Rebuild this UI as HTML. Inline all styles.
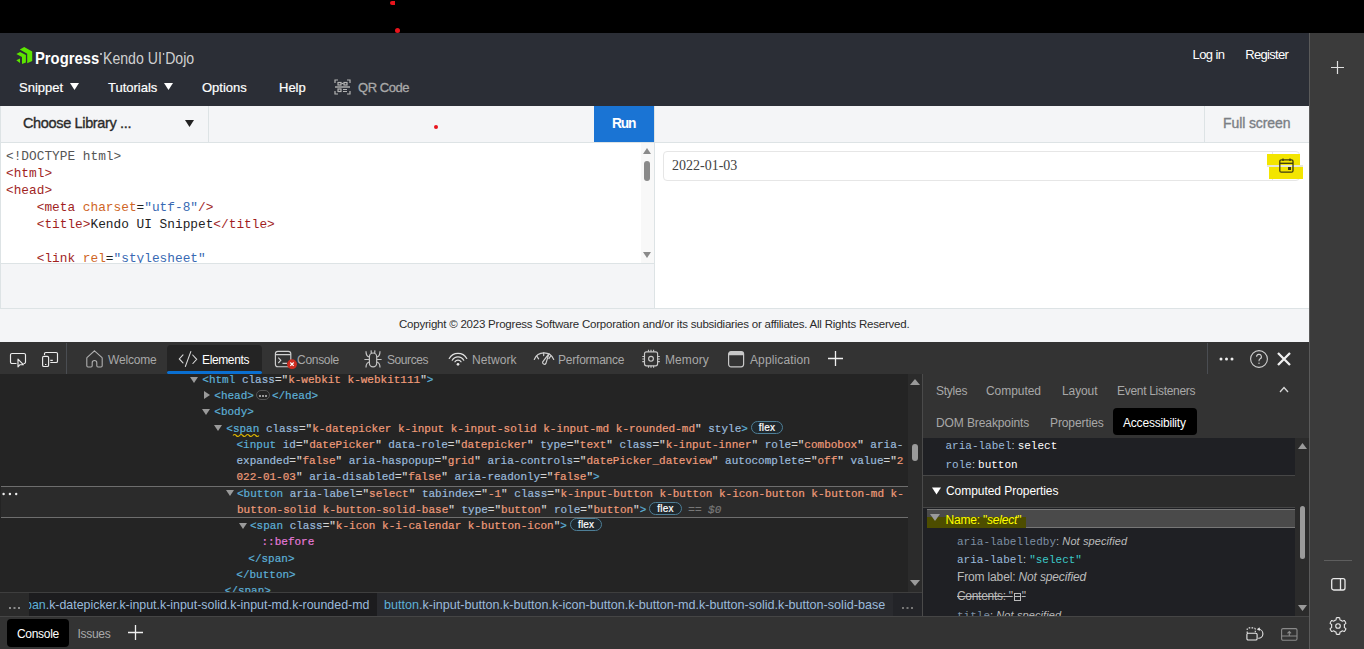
<!DOCTYPE html>
<html><head><meta charset="utf-8">
<style>
*{box-sizing:border-box;margin:0;padding:0}
html,body{width:1364px;height:649px;overflow:hidden;background:#000;font-family:"Liberation Sans",sans-serif}
.a{position:absolute}
.t{position:absolute;white-space:pre}
.mono{font-family:"Liberation Mono",monospace}
/* code editor */
.ce{font-family:"Liberation Mono",monospace;font-size:12.8px;line-height:17px;color:#222}
.tg{color:#a11f1f}.at{color:#cf6526}.vl{color:#3869b3}
/* devtools elements */
.el{font-family:"Liberation Mono",monospace;font-size:11px;line-height:16.25px;height:16.25px;white-space:pre;color:#ccc;-webkit-text-stroke:0.2px currentColor}
.b{color:#5db0d7}.n{color:#9bbbdc}.v{color:#f09c7a}.p{color:#d4d4d4}
.tri{position:absolute;width:0;height:0;border-left:4px solid transparent;border-right:4px solid transparent;border-top:6px solid #9a9a9a}
.flex{display:inline-block;font-family:"Liberation Sans",sans-serif;font-size:10px;line-height:11px;color:#fff;border:1px solid #4e7e96;border-radius:7px;padding:0 7px;margin-left:3px;vertical-align:1px;background:#1f282d;letter-spacing:0.2px}
.tab{position:absolute;top:354px;font-size:12px;line-height:12px;color:#a8a8a8;letter-spacing:-0.3px;white-space:pre}
.ic{position:absolute;overflow:visible}
</style></head>
<body>
<!-- top black bar dots -->
<div class="a" style="left:390px;top:1px;width:5px;height:4px;border-radius:2px 0 0 2px;background:#e8141c"></div>
<div class="a" style="left:395px;top:28px;width:5px;height:5px;border-radius:50%;background:#e8141c"></div>

<!-- dojo header -->
<div class="a" style="left:0;top:33px;width:1309px;height:73px;background:#2b2e36"></div>
<svg class="ic" style="left:15px;top:46px" width="19" height="19" viewBox="0 0 19 19">
  <polygon points="4.8,3.5 9.2,1 17.2,5.5 17.2,15 12.2,17.2 12.2,7.8" fill="#5ce500"/>
  <polygon points="1.3,8 5.1,6 10.9,9.1 10.9,16.5 7,18 7,11" fill="#5ce500"/>
  <polygon points="1.3,14.3 5,12.6 5,17" fill="#5ce500"/>
</svg>
<div class="t" style="left:35px;top:49.5px;color:#fff;font-size:17px;line-height:17px;font-weight:bold;transform:scaleX(0.87);transform-origin:0 0">Progress</div>
<div class="a" style="left:99.5px;top:53px;width:2px;height:2px;border-radius:1px;background:#ddd"></div>
<div class="t" style="left:103px;top:49.5px;color:#d0d0d0;font-size:17px;line-height:17px;transform:scaleX(0.83);transform-origin:0 0">Kendo UI<span style="display:inline-block;width:2px;height:2px;border-radius:1px;background:#ccc;vertical-align:9px;margin:0 1px"></span>Dojo</div>
<div class="t" style="left:1192.5px;top:48px;color:#fff;font-size:13px;line-height:13px;letter-spacing:-0.6px">Log in</div>
<div class="t" style="left:1245.3px;top:48px;color:#fff;font-size:13px;line-height:13px;letter-spacing:-0.7px">Register</div>
<div class="t" style="left:19px;top:81px;color:#fff;font-size:13px;line-height:13px;-webkit-text-stroke:0.2px #fff">Snippet</div>
<svg class="ic" style="left:70px;top:83px" width="9" height="8"><polygon points="0,0 9,0 4.5,7" fill="#fff"/></svg>
<div class="t" style="left:108px;top:81px;color:#fff;font-size:13px;line-height:13px;-webkit-text-stroke:0.2px #fff">Tutorials</div>
<svg class="ic" style="left:164px;top:83px" width="9" height="8"><polygon points="0,0 9,0 4.5,7" fill="#fff"/></svg>
<div class="t" style="left:202px;top:81px;color:#fff;font-size:13px;line-height:13px;-webkit-text-stroke:0.2px #fff">Options</div>
<div class="t" style="left:279px;top:81px;color:#fff;font-size:13px;line-height:13px;-webkit-text-stroke:0.2px #fff">Help</div>
<svg class="ic" style="left:334px;top:79px" width="17" height="16" viewBox="0 0 17 16" fill="none" stroke="#b4b4b4" stroke-width="1.2">
  <path d="M1,4 V1 H4 M13,1 H16 V4 M16,12 V15 H13 M4,15 H1 V12"/>
  <rect x="4" y="3.5" width="3" height="2.5"/><rect x="10" y="3.5" width="3" height="2.5"/>
  <path d="M7.5,4.5 H9.5"/>
  <path d="M1,8 H16" stroke-width="1.4"/>
  <rect x="4" y="10" width="3" height="2.5"/><path d="M9,10.5 H13 M9,12.5 H13"/>
</svg>
<div class="t" style="left:358px;top:81px;color:#a9a9a9;font-size:13px;line-height:13px;letter-spacing:-0.45px;-webkit-text-stroke:0.3px #a9a9a9">QR Code</div>

<!-- toolbar -->
<div class="a" style="left:0;top:106px;width:1309px;height:37px;background:#f4f5f7;border-bottom:1px solid #dde3e5;border-left:1px solid #dde3e5"></div>
<div class="t" style="left:23px;top:116px;color:#2b2b2b;font-size:14.5px;line-height:14.5px;letter-spacing:-0.35px;-webkit-text-stroke:0.35px #2b2b2b">Choose Library ...</div>
<svg class="ic" style="left:185px;top:120px" width="9" height="8"><polygon points="0,0 9,0 4.5,7" fill="#222"/></svg>
<div class="a" style="left:208px;top:106px;width:1px;height:36px;background:#dde3e5"></div>
<div class="a" style="left:594px;top:106px;width:60px;height:36px;background:#1a74d4"></div>
<div class="t" style="left:612px;top:116.5px;color:#fff;font-size:13.8px;line-height:13.8px;font-weight:bold;letter-spacing:-1.2px">Run</div>
<div class="a" style="left:654px;top:106px;width:1px;height:37px;background:#dde3e5"></div>
<div class="a" style="left:1204px;top:106px;width:1px;height:36px;background:#dde3e5"></div>
<div class="t" style="left:1223px;top:116px;color:#7b7f85;font-size:14px;line-height:14px;letter-spacing:-0.1px;-webkit-text-stroke:0.35px #7b7f85">Full screen</div>
<!-- red dot -->
<div class="a" style="left:434px;top:124.5px;width:4px;height:4px;border-radius:50%;background:#e8141c"></div>

<!-- editor -->
<div class="a" style="left:0;top:143px;width:654px;height:120px;background:#fff;border-left:1px solid #dde3e5;overflow:hidden">
<div class="t ce" style="left:5px;top:4.8px"><span style="color:#555">&lt;!DOCTYPE html&gt;</span>
<span class="tg">&lt;html&gt;</span>
<span class="tg">&lt;head&gt;</span>
    <span class="tg">&lt;meta</span> <span class="at">charset</span>=<span class="vl">"utf-8"</span><span class="tg">/&gt;</span>
    <span class="tg">&lt;title&gt;</span>Kendo UI Snippet<span class="tg">&lt;/title&gt;</span>

    <span class="tg">&lt;link</span> <span class="at">rel</span>=<span class="vl">"stylesheet"</span></div>
</div>
<!-- editor scrollbar -->
<div class="a" style="left:641px;top:143px;width:13px;height:120px;background:#f8f8f8"></div>
<svg class="ic" style="left:642px;top:147px" width="10" height="8"><polygon points="5,1 9,7 1,7" fill="#8a8a8a"/></svg>
<div class="a" style="left:644px;top:160.5px;width:6px;height:20.5px;border-radius:3px;background:#8a8a8a"></div>
<svg class="ic" style="left:642px;top:251px" width="10" height="8"><polygon points="1,1 9,1 5,7" fill="#8a8a8a"/></svg>
<div class="a" style="left:0;top:263px;width:654px;height:45px;background:#f4f5f7;border-left:1px solid #dde3e5;border-top:1px solid #dde3e5"></div>

<!-- preview -->
<div class="a" style="left:655px;top:143px;width:654px;height:165px;background:#fff"></div>
<div class="a" style="left:654px;top:143px;width:1px;height:165px;background:#dde3e5"></div>
<div class="a" style="left:663px;top:151px;width:637px;height:30px;border:1px solid #e6e6e6;border-radius:4px;background:#fff"></div>
<div class="a" style="left:1272px;top:152px;width:1px;height:28px;background:#e4e4e4"></div>
<div class="t" style="left:672px;top:158.5px;font-family:'Liberation Serif',serif;font-size:14px;line-height:14px;color:#424242">2022-01-03</div>
<!-- yellow highlight -->
<div class="a" style="left:1267px;top:153.5px;width:33px;height:11.5px;background:#f3e500"></div>
<div class="a" style="left:1269px;top:167px;width:34px;height:12px;background:#f3e500"></div>
<div class="a" style="left:1267px;top:165px;width:36px;height:2px;background:#e8e8d8"></div>
<svg class="ic" style="left:1279px;top:158px" width="15" height="15" viewBox="0 0 15 15" fill="none" stroke="#3c3a10" stroke-width="1.3">
  <rect x="0.8" y="1.8" width="13.2" height="12.4" rx="1.5"/>
  <path d="M0.8,5.3 H14"/>
  <path d="M4,0.5 V3 M11,0.5 V3"/>
  <rect x="9" y="9" width="3" height="3" fill="#3c3a10" stroke="none"/>
</svg>

<!-- footer -->
<div class="a" style="left:0;top:308px;width:1309px;height:34px;background:#f4f5f7;border-top:1px solid #dde3e5"></div>
<div class="t" style="left:399px;top:318.5px;font-size:11.5px;line-height:11.5px;color:#2b2b2b;letter-spacing:-0.22px">Copyright © 2023 Progress Software Corporation and/or its subsidiaries or affiliates. All Rights Reserved.</div>

<!-- right sidebar -->
<div class="a" style="left:1309px;top:33px;width:55px;height:616px;background:#3b3b3b;border-left:1px solid #5a5a5a"></div>
<svg class="ic" style="left:1331px;top:61px" width="13" height="13"><path d="M6.5,0 V13 M0,6.5 H13" stroke="#e0e0e0" stroke-width="1.2"/></svg>
<div class="a" style="left:1324px;top:560px;width:28px;height:1px;background:#5e5e5e"></div>
<svg class="ic" style="left:1331px;top:578px" width="15" height="13" viewBox="0 0 15 13" fill="none" stroke="#e8e8e8" stroke-width="1.3"><rect x="0.7" y="0.7" width="13.3" height="11.3" rx="2"/><path d="M9.5,0.7 V12"/></svg>
<svg class="ic" style="left:1329px;top:617px" width="18" height="18" viewBox="0 0 18 18" fill="none" stroke="#e8e8e8" stroke-width="1.1"><circle cx="9" cy="9" r="2.3"/><path d="M9.0,0.6 L9.3,0.6 L9.6,0.6 L9.9,0.6 L10.2,0.7 L10.5,0.7 L10.7,1.0 L10.8,1.6 L10.9,2.4 L11.0,2.9 L11.2,3.0 L11.4,3.1 L11.6,3.2 L11.8,3.2 L12.0,3.3 L12.2,3.5 L12.4,3.6 L12.6,3.7 L12.8,3.8 L12.9,4.0 L13.1,4.1 L13.3,4.2 L13.8,4.0 L14.5,3.7 L15.1,3.5 L15.4,3.6 L15.6,3.8 L15.8,4.1 L16.0,4.3 L16.1,4.5 L16.3,4.8 L16.4,5.1 L16.5,5.3 L16.7,5.6 L16.8,5.9 L16.9,6.1 L16.8,6.5 L16.3,6.9 L15.7,7.3 L15.3,7.7 L15.3,7.9 L15.3,8.1 L15.4,8.3 L15.4,8.6 L15.4,8.8 L15.4,9.0 L15.4,9.2 L15.4,9.4 L15.4,9.7 L15.3,9.9 L15.3,10.1 L15.3,10.3 L15.7,10.7 L16.3,11.1 L16.8,11.5 L16.9,11.9 L16.8,12.1 L16.7,12.4 L16.5,12.7 L16.4,12.9 L16.3,13.2 L16.1,13.5 L16.0,13.7 L15.8,13.9 L15.6,14.2 L15.4,14.4 L15.1,14.5 L14.5,14.3 L13.8,14.0 L13.3,13.8 L13.1,13.9 L12.9,14.0 L12.8,14.2 L12.6,14.3 L12.4,14.4 L12.2,14.5 L12.0,14.7 L11.8,14.8 L11.6,14.8 L11.4,14.9 L11.2,15.0 L11.0,15.1 L10.9,15.6 L10.8,16.4 L10.7,17.0 L10.5,17.3 L10.2,17.3 L9.9,17.4 L9.6,17.4 L9.3,17.4 L9.0,17.4 L8.7,17.4 L8.4,17.4 L8.1,17.4 L7.8,17.3 L7.5,17.3 L7.3,17.0 L7.2,16.4 L7.1,15.6 L7.0,15.1 L6.8,15.0 L6.6,14.9 L6.4,14.8 L6.2,14.8 L6.0,14.7 L5.8,14.5 L5.6,14.4 L5.4,14.3 L5.2,14.2 L5.1,14.0 L4.9,13.9 L4.7,13.8 L4.2,14.0 L3.5,14.3 L2.9,14.5 L2.6,14.4 L2.4,14.2 L2.2,13.9 L2.0,13.7 L1.9,13.5 L1.7,13.2 L1.6,12.9 L1.5,12.7 L1.3,12.4 L1.2,12.1 L1.1,11.9 L1.2,11.5 L1.7,11.1 L2.3,10.7 L2.7,10.3 L2.7,10.1 L2.7,9.9 L2.6,9.7 L2.6,9.4 L2.6,9.2 L2.6,9.0 L2.6,8.8 L2.6,8.6 L2.6,8.3 L2.7,8.1 L2.7,7.9 L2.7,7.7 L2.3,7.3 L1.7,6.9 L1.2,6.5 L1.1,6.1 L1.2,5.9 L1.3,5.6 L1.5,5.3 L1.6,5.1 L1.7,4.8 L1.9,4.5 L2.0,4.3 L2.2,4.1 L2.4,3.8 L2.6,3.6 L2.9,3.5 L3.5,3.7 L4.2,4.0 L4.7,4.2 L4.9,4.1 L5.1,4.0 L5.2,3.8 L5.4,3.7 L5.6,3.6 L5.8,3.5 L6.0,3.3 L6.2,3.2 L6.4,3.2 L6.6,3.1 L6.8,3.0 L7.0,2.9 L7.1,2.4 L7.2,1.6 L7.3,1.0 L7.5,0.7 L7.8,0.7 L8.1,0.6 L8.4,0.6 L8.7,0.6 Z"/></svg>

<!-- devtools toolbar -->
<div class="a" style="left:0;top:342px;width:1309px;height:32px;background:#333333"></div>
<svg class="ic" style="left:10px;top:352px" width="17" height="16" viewBox="0 0 17 16" fill="none" stroke="#ececec" stroke-width="1.15">
  <path d="M6.5,11.5 H2 A1.5,1.5 0 0 1 0.5,10 V3 A1.5,1.5 0 0 1 2,1.5 H14 A1.5,1.5 0 0 1 15.5,3 V10 A1.5,1.5 0 0 1 14,11.5 H13.5"/>
  <path d="M8,7.2 V14.8 L10,12.7 L13.3,12.7 Z" stroke-linejoin="round"/>
</svg>
<svg class="ic" style="left:42px;top:351px" width="17" height="17" viewBox="0 0 17 17" fill="none" stroke="#ececec" stroke-width="1.15">
  <path d="M2.5,4 V2.8 A1.3,1.3 0 0 1 3.8,1.5 H14.2 A1.3,1.3 0 0 1 15.5,2.8 V10.2 A1.3,1.3 0 0 1 14.2,11.5 H8.3"/>
  <rect x="0.6" y="5.3" width="6" height="10.2" rx="1.3"/>
  <path d="M8.3,9.3 H10.8 M3,13.5 H4.4"/>
</svg>
<div class="a" style="left:66px;top:343px;width:1px;height:31px;background:#4a4d52"></div>
<svg class="ic" style="left:86px;top:350px" width="17" height="18" viewBox="0 0 17 18" fill="none" stroke="#b0b0b0" stroke-width="1.1">
  <path d="M8.5,0.8 L15.8,7.3 A1.2,1.2 0 0 1 16.2,8.2 V15.8 A1.2,1.2 0 0 1 15,17 H12 A1.2,1.2 0 0 1 10.8,15.8 V12.8 A2.3,2.3 0 0 0 6.2,12.8 V15.8 A1.2,1.2 0 0 1 5,17 H2 A1.2,1.2 0 0 1 0.8,15.8 V8.2 A1.2,1.2 0 0 1 1.2,7.3 Z"/>
</svg>
<div class="tab" style="left:108px;letter-spacing:-0.17px">Welcome</div>
<div class="a" style="left:167px;top:345px;width:95px;height:29px;background:#242424;border-radius:4px 4px 0 0"></div>
<div class="a" style="left:167px;top:371px;width:95px;height:3px;background:#0a6fd1;border-radius:2px"></div>
<svg class="ic" style="left:178px;top:351px" width="20" height="16" viewBox="0 0 20 16" fill="none" stroke="#d8d8d8" stroke-width="1.1">
  <path d="M5,3.9 L1.3,7.9 L5,11.9 M14.7,4 L18.7,8.3 L14.9,12.5 M12.8,0.6 L7.4,15.4" stroke-linecap="round"/>
</svg>
<div class="tab" style="left:202px;color:#fff;letter-spacing:-0.37px">Elements</div>
<svg class="ic" style="left:274px;top:350px" width="24" height="20" viewBox="0 0 24 20" fill="none" stroke="#d0d0d0" stroke-width="1.15">
  <rect x="1.4" y="1.3" width="15.4" height="15.4" rx="2.5"/>
  <path d="M1.4,4.6 H16.8 M4.3,7.7 L6.8,10.3 L4.3,13 M8.5,13.3 H13"/>
  <circle cx="18" cy="14.2" r="4.9" fill="#cf2c21" stroke="none"/>
  <path d="M16.3,12.5 L19.7,15.9 M19.7,12.5 L16.3,15.9" stroke="#fff" stroke-width="1.1"/>
</svg>
<div class="tab" style="left:297px;letter-spacing:-0.29px">Console</div>
<svg class="ic" style="left:364px;top:350px" width="18" height="18" viewBox="0 0 18 18" fill="none" stroke="#c4c4c4" stroke-width="1.2">
  <rect x="5.4" y="3" width="7.3" height="13.8" rx="3.65"/>
  <path d="M7.3,3.2 L7.1,0.4 M10.7,3.2 L10.9,0.4 M5.4,7 C3.2,6.6 2,5 2,1.2 M12.7,7 C14.8,6.6 16,5 16,1.2 M0.4,9.5 H5.4 M12.7,9.5 H17.6 M5.4,12 C3.2,12.4 2,14 2,17.5 M12.7,12 C14.8,12.4 16,14 16,17.5"/>
</svg>
<div class="tab" style="left:387px;letter-spacing:-0.43px">Sources</div>
<svg class="ic" style="left:448px;top:351px" width="20" height="16" viewBox="0 0 20 16" fill="none" stroke="#e0e0e0" stroke-width="1.25" stroke-linecap="round">
  <path d="M1.25,7.45 A10,10 0 0 1 18.75,7.45 M4.28,9.2 A6.6,6.6 0 0 1 15.72,9.2 M6.97,10.8 A3.5,3.5 0 0 1 13.03,10.8"/>
  <circle cx="10" cy="13.3" r="1.35" fill="#e8e8e8" stroke="none"/>
</svg>
<div class="tab" style="left:472px;letter-spacing:0.1px">Network</div>
<svg class="ic" style="left:533px;top:350px" width="22" height="17" viewBox="0 0 22 17" fill="none" stroke="#d0d0d0" stroke-width="1.2" stroke-linecap="round">
  <path d="M1.3,9.4 A10.5,10.5 0 0 1 20.7,9.4"/>
  <path d="M10.7,2.8 V5.6 M3.8,6.2 L5.6,8.8 M17.6,6.2 L15.9,8.6"/>
  <path d="M16,3.6 L12.9,13.4 A1.8,1.8 0 0 1 9.7,11.8 Z" stroke-linejoin="round"/>
</svg>
<div class="tab" style="left:558px;letter-spacing:-0.22px">Performance</div>
<svg class="ic" style="left:641px;top:349px" width="20" height="20" viewBox="0 0 20 20" fill="none" stroke="#c8c8c8" stroke-width="1.15">
  <rect x="3.5" y="2.8" width="13.1" height="14" rx="2"/>
  <circle cx="10" cy="9.8" r="2.4"/>
  <path d="M7.5,0.8 V2.8 M10,0.8 V2.8 M12.6,0.8 V2.8 M7.5,16.8 V18.8 M10,16.8 V18.8 M12.6,16.8 V18.8 M1.3,7.5 H3.5 M1.3,10 H3.5 M1.3,12.6 H3.5 M16.6,7.5 H18.8 M16.6,10 H18.8 M16.6,12.6 H18.8"/>
</svg>
<div class="tab" style="left:665px;letter-spacing:0.1px">Memory</div>
<svg class="ic" style="left:727px;top:350px" width="18" height="18" viewBox="0 0 18 18" fill="none" stroke="#c8c8c8" stroke-width="1.2">
  <rect x="1.6" y="1.6" width="15" height="15.2" rx="2.5"/>
  <path d="M1.6,4 A2.4,2.4 0 0 1 4,1.6 H14.2 A2.4,2.4 0 0 1 16.6,4 V5.2 H1.6 Z" fill="#c8c8c8" stroke="none"/>
</svg>
<div class="tab" style="left:750px;letter-spacing:0.12px">Application</div>
<svg class="ic" style="left:828px;top:351px" width="15" height="15"><path d="M7.5,0 V15 M0,7.5 H15" stroke="#f0f0f0" stroke-width="1.3"/></svg>
<div class="a" style="left:1207px;top:343px;width:1px;height:31px;background:#4a4d52"></div>
<svg class="ic" style="left:1219px;top:357px" width="16" height="4"><circle cx="2" cy="2" r="1.5" fill="#eee"/><circle cx="7.5" cy="2" r="1.5" fill="#eee"/><circle cx="13" cy="2" r="1.5" fill="#eee"/></svg>
<svg class="ic" style="left:1250px;top:350px" width="18" height="18" viewBox="0 0 18 18" fill="none" stroke="#d0d0d0" stroke-width="1.1">
  <circle cx="9" cy="9" r="8.4"/>
  <path d="M6.6,6.8 A2.4,2.4 0 1 1 9.8,9 C9,9.4 9,10 9,11.3"/>
  <circle cx="9" cy="13.3" r="0.7" fill="#d0d0d0" stroke="none"/>
</svg>
<svg class="ic" style="left:1277px;top:352px" width="14" height="14"><path d="M1,1 L13,13 M13,1 L1,13" stroke="#f0f0f0" stroke-width="2.3"/></svg>

<!-- elements panel -->
<div class="a" style="left:0;top:374px;width:922px;height:218px;background:#242424;overflow:hidden">
  <div class="a" style="left:1px;top:111.5px;width:907px;height:32.5px;background:#2b2b2b;border-top:1px solid #6e6e6e;border-bottom:1px solid #6e6e6e"></div>
</div>
<div class="a" style="left:0;top:374px;width:908px;height:218px;overflow:hidden">
  <div class="tri" style="left:190px;top:2.5px"></div>
  <div class="a" style="left:204px;top:17px;width:0;height:0;border-top:4px solid transparent;border-bottom:4px solid transparent;border-left:6px solid #9a9a9a"></div>
  <div class="tri" style="left:202px;top:35px"></div>
  <div class="tri" style="left:214px;top:51px"></div>
  <div class="tri" style="left:226px;top:116px"></div>
  <div class="tri" style="left:238.5px;top:148.5px"></div>
  <div class="a" style="top:-2.06px;left:0;width:908px">
    <div class="el" style="padding-left:202.3px"><span class="b">&lt;html</span> <span class="n">class</span><span class="p">="</span><span class="v">k-webkit k-webkit111</span><span class="p">"</span><span class="b">&gt;</span></div>
    <div class="el" style="padding-left:214.3px"><span class="b">&lt;head&gt;</span><span style="display:inline-block;width:14px;height:10px;border:1px solid #555;border-radius:5px;vertical-align:-1px;margin:0 2px;position:relative;-webkit-text-stroke:0"><span class="a" style="left:2.5px;top:3.5px;width:2px;height:2px;background:#999"></span><span class="a" style="left:5.5px;top:3.5px;width:2px;height:2px;background:#999"></span><span class="a" style="left:8.5px;top:3.5px;width:2px;height:2px;background:#999"></span></span><span class="b">&lt;/head&gt;</span></div>
    <div class="el" style="padding-left:214.3px"><span class="b">&lt;body&gt;</span></div>
    <div class="el" style="padding-left:226.3px"><span class="b">&lt;</span><span class="b">span</span> <span class="n">class</span><span class="p">="</span><span class="v">k-datepicker k-input k-input-solid k-input-md k-rounded-md</span><span class="p">"</span> <span class="n">style</span><span class="b">&gt;</span><span class="flex">flex</span></div>
    <div class="el" style="padding-left:236.5px"><span class="b">&lt;input</span> <span class="n">id</span><span class="p">="</span><span class="v">datePicker</span><span class="p">"</span> <span class="n">data-role</span><span class="p">="</span><span class="v">datepicker</span><span class="p">"</span> <span class="n">type</span><span class="p">="</span><span class="v">text</span><span class="p">"</span> <span class="n">class</span><span class="p">="</span><span class="v">k-input-inner</span><span class="p">"</span> <span class="n">role</span><span class="p">="</span><span class="v">combobox</span><span class="p">"</span> <span class="n">aria-</span></div>
    <div class="el" style="padding-left:236.5px"><span class="n">expanded</span><span class="p">="</span><span class="v">false</span><span class="p">"</span> <span class="n">aria-haspopup</span><span class="p">="</span><span class="v">grid</span><span class="p">"</span> <span class="n">aria-controls</span><span class="p">="</span><span class="v">datePicker_dateview</span><span class="p">"</span> <span class="n">autocomplete</span><span class="p">="</span><span class="v">off</span><span class="p">"</span> <span class="n">value</span><span class="p">="</span><span class="v">2</span></div>
    <div class="el" style="padding-left:236.5px"><span class="v">022-01-03</span><span class="p">"</span> <span class="n">aria-disabled</span><span class="p">="</span><span class="v">false</span><span class="p">"</span> <span class="n">aria-readonly</span><span class="p">="</span><span class="v">false</span><span class="p">"</span><span class="b">&gt;</span></div>
    <div class="el" style="padding-left:237px"><span class="b">&lt;button</span> <span class="n">aria-label</span><span class="p">="</span><span class="v">select</span><span class="p">"</span> <span class="n">tabindex</span><span class="p">="</span><span class="v">-1</span><span class="p">"</span> <span class="n">class</span><span class="p">="</span><span class="v">k-input-button k-button k-icon-button k-button-md k-</span></div>
    <div class="el" style="padding-left:237px"><span class="v">button-solid k-button-solid-base</span><span class="p">"</span> <span class="n">type</span><span class="p">="</span><span class="v">button</span><span class="p">"</span> <span class="n">role</span><span class="p">="</span><span class="v">button</span><span class="p">"</span><span class="b">&gt;</span><span class="flex">flex</span> <span style="color:#777;font-style:italic">== $0</span></div>
    <div class="el" style="padding-left:250px"><span class="b">&lt;span</span> <span class="n">class</span><span class="p">="</span><span class="v">k-icon k-i-calendar k-button-icon</span><span class="p">"</span><span class="b">&gt;</span><span class="flex">flex</span></div>
    <div class="el" style="padding-left:261.5px"><span style="color:#e47ad8">::before</span></div>
    <div class="el" style="padding-left:248.3px"><span class="b">&lt;/span&gt;</span></div>
    <div class="el" style="padding-left:236.3px"><span class="b">&lt;/button&gt;</span></div>
    <div class="el" style="padding-left:224.7px"><span class="b">&lt;/span&gt;</span></div>
  </div>
  <svg class="ic" style="left:2px;top:118px" width="16" height="4"><circle cx="1.6" cy="2" r="1.2" fill="#eee"/><circle cx="7.9" cy="2" r="1.2" fill="#eee"/><circle cx="14.2" cy="2" r="1.2" fill="#eee"/></svg>
</div>
<svg class="ic" style="left:233px;top:433px" width="27" height="5" viewBox="0 0 27 5"><path d="M0,2.5 Q1.6,0.5 3.25,2.5 T6.5,2.5 T9.75,2.5 T13,2.5 T16.25,2.5 T19.5,2.5 T22.75,2.5 T26,2.5" stroke="#d9b300" stroke-width="1.2" fill="none"/></svg>
<!-- elements scrollbar -->
<div class="a" style="left:908px;top:374px;width:14px;height:218px;background:#2b2b2b"></div>
<svg class="ic" style="left:909px;top:378px" width="12" height="8"><polygon points="6,1 11,7 1,7" fill="#9a9a9a"/></svg>
<div class="a" style="left:912px;top:444px;width:6px;height:17px;border-radius:3px;background:#9a9a9a"></div>
<svg class="ic" style="left:909px;top:579px" width="12" height="8"><polygon points="1,1 11,1 6,7" fill="#9a9a9a"/></svg>
<div class="a" style="left:922px;top:374px;width:1px;height:243px;background:#4a4a4a"></div>

<!-- breadcrumb -->
<div class="a" style="left:0;top:592px;width:922px;height:25px;background:#1f2023;border-top:1px solid #3e3e3e;border-bottom:1px solid #3e3e3e"></div>
<div class="a" style="left:0;top:593px;width:29px;height:23px;background:#2a2a2a"></div>
<svg class="ic" style="left:9px;top:606.5px" width="12" height="3"><rect x="0" y="0" width="2" height="2" fill="#8c8c8c"/><rect x="4.5" y="0" width="2" height="2" fill="#8c8c8c"/><rect x="9" y="0" width="2" height="2" fill="#8c8c8c"/></svg>
<div class="a" style="left:29px;top:593px;width:348px;height:23px;background:#1c1c1e;overflow:hidden">
  <div class="t" style="left:-4px;top:6px;font-size:12.4px;line-height:12.4px;color:#9bbbdc"><span style="color:#5db0d7">pan</span>.k-datepicker.k-input.k-input-solid.k-input-md.k-rounded-md</div>
</div>
<div class="a" style="left:377px;top:593px;width:516px;height:23px;background:#292a2e"></div>
<div class="t" style="left:384px;top:599px;font-size:12.6px;line-height:12.6px;color:#9bbbdc"><span style="color:#5db0d7">button</span>.k-input-button.k-button.k-icon-button.k-button-md.k-button-solid.k-button-solid-base</div>
<div class="a" style="left:893px;top:593px;width:29px;height:23px;background:#232428"></div><svg class="ic" style="left:902px;top:607px" width="12" height="3"><rect x="0" y="0" width="2" height="2" fill="#777"/><rect x="4.5" y="0" width="2" height="2" fill="#777"/><rect x="9" y="0" width="2" height="2" fill="#777"/></svg>

<!-- right panel -->
<div class="a" style="left:923px;top:374px;width:386px;height:64px;background:#333333"></div>
<div class="tab" style="left:936px;top:385px;letter-spacing:-0.25px">Styles</div>
<div class="tab" style="left:986px;top:385px;letter-spacing:-0.05px">Computed</div>
<div class="tab" style="left:1062px;top:385px;letter-spacing:-0.1px">Layout</div>
<div class="tab" style="left:1117px;top:385px;letter-spacing:-0.3px">Event Listeners</div>
<svg class="ic" style="left:1279px;top:386px" width="10" height="7"><path d="M1,6 L5,1.5 L9,6" stroke="#d8d8d8" stroke-width="1.3" fill="none"/></svg>
<div class="tab" style="left:936px;top:417px;letter-spacing:-0.1px">DOM Breakpoints</div>
<div class="tab" style="left:1050px;top:417px;letter-spacing:-0.1px">Properties</div>
<div class="a" style="left:1113px;top:408px;width:84px;height:27px;background:#000;border-radius:4px"></div>
<div class="tab" style="left:1123px;top:417px;letter-spacing:-0.2px;color:#fff">Accessibility</div>

<div class="a" style="left:923px;top:438px;width:372px;height:178px;background:#1f2024"></div>
<div class="a" style="left:923px;top:475px;width:372px;height:33px;background:#2b2b2b;border-top:1px solid #464646;border-bottom:1px solid #464646"></div>
<div class="t mono" style="left:945.5px;top:440.4px;font-size:11px;line-height:11px;color:#9bbbdc">aria-label<span style="color:#ccc;font-family:'Liberation Sans'">: </span><span style="color:#fff">select</span></div>
<div class="t mono" style="left:945.5px;top:459.3px;font-size:11px;line-height:11px;color:#9bbbdc">role<span style="color:#ccc;font-family:'Liberation Sans'">: </span><span style="color:#fff">button</span></div>
<svg class="ic" style="left:932px;top:487px" width="9" height="8"><polygon points="0,0.5 9,0.5 4.5,7.5" fill="#fff"/></svg>
<div class="t" style="left:946px;top:485px;font-size:12px;line-height:12px;color:#fff;letter-spacing:-0.05px">Computed Properties</div>
<div class="a" style="left:927px;top:509px;width:368px;height:19px;background:#4a4a4a;border-top:1px solid #777;border-bottom:1px solid #777"></div>
<div class="a" style="left:927px;top:517px;width:99px;height:11px;background:#4d4d00"></div>
<svg class="ic" style="left:930px;top:514px" width="10" height="8"><polygon points="0,0 10,0 5,7" fill="#9a9a9a"/></svg>
<div class="t" style="left:945.5px;top:514px;font-size:12px;line-height:12px;color:#ffff00;letter-spacing:-0.2px">Name: "<i>select</i>"</div>
<div class="t mono" style="left:957px;top:535.6px;font-size:11px;line-height:11px;color:#7d8fa3">aria-labelledby<span style="color:#bbb;font-family:'Liberation Sans';letter-spacing:0.1px">: <i>Not specified</i></span></div>
<div class="t mono" style="left:957px;top:554.4px;font-size:11px;line-height:11px;color:#9bbbdc">aria-label<span style="color:#ccc;font-family:'Liberation Sans'">: </span><span style="color:#3cc8c8">"select"</span></div>
<div class="t" style="left:957px;top:571px;font-size:12px;line-height:12px;color:#bbb;letter-spacing:-0.15px">From label: <i>Not specified</i></div>
<div class="t" style="left:957px;top:590px;font-size:12px;line-height:12px;color:#bbb;letter-spacing:-0.3px;text-decoration:line-through">Contents: "<span style="display:inline-block;width:7px;height:8px;border:1px solid #bbb;vertical-align:-1px;margin:0 1px;background:linear-gradient(#bbb,#bbb) no-repeat 0 2px/100% 1px"></span>"</div>
<div class="a" style="left:923px;top:608px;width:372px;height:8px;overflow:hidden">
  <div class="t mono" style="left:34px;top:2px;font-size:11px;line-height:11px;color:#7d8fa3">title<span style="color:#bbb;font-family:'Liberation Sans';letter-spacing:0.1px">: <i>Not specified</i></span></div>
</div>
<!-- a11y scrollbar -->
<div class="a" style="left:1295px;top:438px;width:14px;height:178px;background:#2b2b2b"></div>
<svg class="ic" style="left:1297px;top:442px" width="11" height="8"><polygon points="5.5,1 10,7 1,7" fill="#9a9a9a"/></svg>
<div class="a" style="left:1299.5px;top:506px;width:5.5px;height:53px;border-radius:3px;background:#9a9a9a"></div>
<svg class="ic" style="left:1297px;top:604px" width="11" height="8"><polygon points="1,1 10,1 5.5,7" fill="#9a9a9a"/></svg>

<!-- drawer -->
<div class="a" style="left:0;top:616px;width:1309px;height:33px;background:#333333;border-top:1px solid #454545"></div>
<div class="a" style="left:7px;top:619px;width:62px;height:27.5px;background:#000;border-radius:4px"></div>
<div class="t" style="left:17px;top:627.5px;font-size:12px;line-height:12px;color:#fff;letter-spacing:-0.3px">Console</div>
<div class="t" style="left:77.5px;top:627.5px;font-size:12px;line-height:12px;color:#aaa;letter-spacing:-0.3px">Issues</div>
<svg class="ic" style="left:128px;top:625px" width="15" height="15"><path d="M7.5,0 V15 M0,7.5 H15" stroke="#f0f0f0" stroke-width="1.3"/></svg>
<svg class="ic" style="left:1246px;top:627px" width="18" height="14" viewBox="0 0 18 14" fill="none" stroke="#e8e8e8" stroke-width="1.1">
  <path d="M1.2,6 V2.2 A1.3,1.3 0 0 1 2.5,0.9 H8 A1.3,1.3 0 0 1 9.3,2.2 V6" stroke-dasharray="1.6 1.3"/>
  <rect x="0.9" y="6.2" width="10.2" height="6.8" rx="1.3"/>
  <path d="M12.6,2.3 A4.3,4.3 0 0 1 12.2,11.3"/>
  <path d="M11.3,2.3 L13.4,0.8 L13.6,3.4 Z" fill="#e8e8e8" stroke-width="0.6"/>
</svg>
<svg class="ic" style="left:1281px;top:628px" width="17" height="13" viewBox="0 0 17 13" fill="none" stroke="#8a8a8a" stroke-width="1.1">
  <rect x="0.6" y="0.6" width="15.4" height="11.6" rx="1.4"/>
  <path d="M0.6,8 H16 M8.3,7.5 V3.5 M6.5,5.3 L8.3,3.5 L10.1,5.3"/>
</svg>
</body></html>
